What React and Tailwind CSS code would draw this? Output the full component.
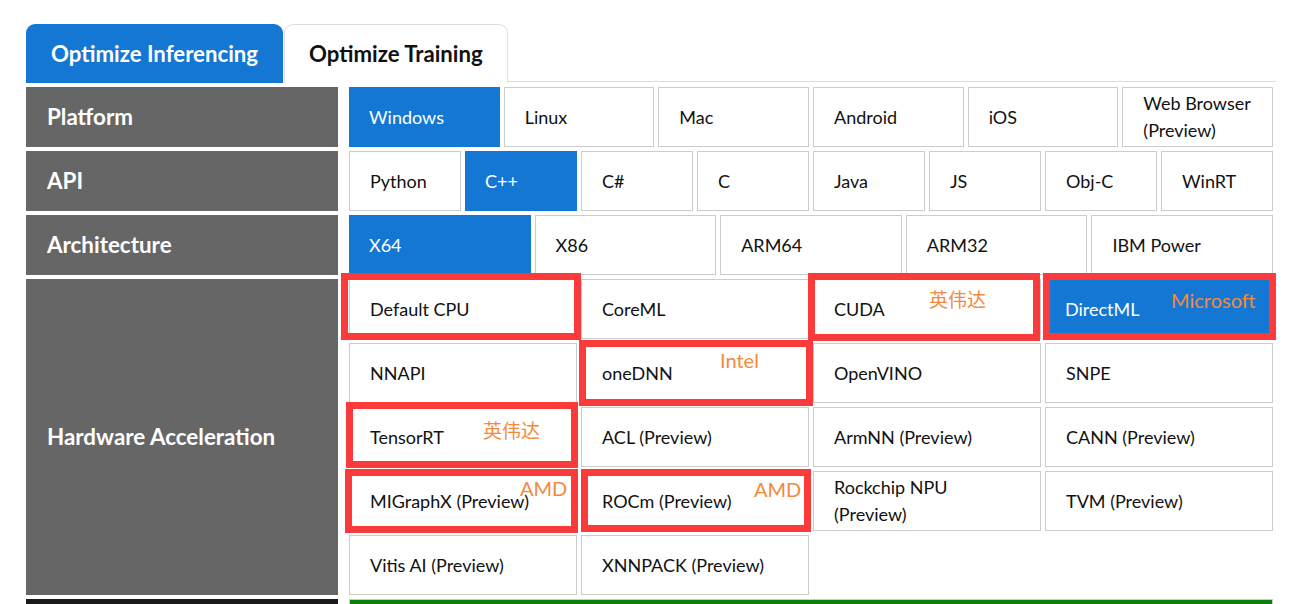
import React from "react";

const platforms = ["Windows", "Linux", "Mac", "Android", "iOS", "Web Browser (Preview)"];
const apis = ["Python", "C++", "C#", "C", "Java", "JS", "Obj-C", "WinRT"];
const archs = ["X64", "X86", "ARM64", "ARM32", "IBM Power"];
const hardware = [
  "Default CPU",
  "CoreML",
  "CUDA",
  "DirectML",
  "NNAPI",
  "oneDNN",
  "OpenVINO",
  "SNPE",
  "TensorRT",
  "ACL (Preview)",
  "ArmNN (Preview)",
  "CANN (Preview)",
  "MIGraphX (Preview)",
  "ROCm (Preview)",
  "Rockchip NPU (Preview)",
  "TVM (Preview)",
  "Vitis AI (Preview)",
  "XNNPACK (Preview)",
];

const selected = new Set(["Windows", "C++", "X64", "DirectML"]);

function Option({ label }) {
  const on = selected.has(label);
  return (
    <div
      className={
        on
          ? "flex h-[60px] items-center bg-[#1477d3] pl-[20px] pr-[18px] text-[18px] leading-[27px] text-white"
          : "flex h-[60px] items-center border border-[#cccccc] bg-white pl-[20px] pr-[18px] text-[18px] leading-[27px] text-[#111111]"
      }
    >
      <span>{label}</span>
    </div>
  );
}

function Label({ children, tall }) {
  return (
    <div
      className={
        "flex w-[312px] shrink-0 items-center bg-[#666666] pl-[21px] text-[22.4px] font-bold text-white " +
        (tall ? "h-[316px]" : "h-[60px]")
      }
    >
      {children}
    </div>
  );
}

// Red outline marking a highlighted provider
function Mark({ className }) {
  return <div className={"pointer-events-none absolute border-[7px] border-[#fc3a3a] " + className} />;
}

// Vendor note written over a provider cell
function Note({ className, children, cjk }) {
  return (
    <span
      className={
        "pointer-events-none absolute leading-none text-[#f5893b] " +
        (cjk
          ? "text-[19px] [font-family:'Noto_Sans_CJK_SC',sans-serif]"
          : "text-[20px]") +
        " " +
        className
      }
    >
      {children}
    </span>
  );
}

export default function App() {
  return (
    <div className="relative h-[604px] w-[1297px] overflow-hidden bg-white pl-[26px] pt-[24px] [font-family:Lato,'Noto_Sans',sans-serif]">
      {/* tab strip */}
      <div className="flex h-[59px] w-[1250px] items-stretch">
        <div className="flex w-[257px] items-center rounded-t-[9px] bg-[#1477d3] pl-[25px] text-[22.2px] font-bold text-white">
          Optimize Inferencing
        </div>
        <div className="ml-px flex w-[224px] items-center rounded-t-[9px] border border-b-0 border-[#dddddd] pl-[24px] text-[22.2px] font-bold text-[#111111]">
          Optimize Training
        </div>
        <div className="mb-px flex-1 border-b border-[#dddddd]" />
      </div>

      {/* selector table */}
      <div className="mt-[4px] flex flex-col gap-[4px]">
        <div className="flex gap-[11px]">
          <Label>Platform</Label>
          <div className="grid w-[924px] grid-cols-6 gap-[4px]">
            {platforms.map((p) => (
              <Option key={p} label={p} />
            ))}
          </div>
        </div>
        <div className="flex gap-[11px]">
          <Label>API</Label>
          <div className="grid w-[924px] grid-cols-8 gap-[4px]">
            {apis.map((p) => (
              <Option key={p} label={p} />
            ))}
          </div>
        </div>
        <div className="flex gap-[11px]">
          <Label>Architecture</Label>
          <div className="grid w-[924px] grid-cols-5 gap-[4px]">
            {archs.map((p) => (
              <Option key={p} label={p} />
            ))}
          </div>
        </div>
        <div className="flex gap-[11px]">
          <Label tall>Hardware Acceleration</Label>
          <div className="grid w-[924px] grid-cols-4 content-start gap-[4px]">
            {hardware.map((p) => (
              <Option key={p} label={p} />
            ))}
          </div>
        </div>
        <div className="flex gap-[11px]">
          <div className="h-[40px] w-[312px] shrink-0 bg-[#1a1a1a]" />
          <div className="h-[40px] w-[924px] border border-[#cccccc] bg-[#0a7d0a]" />
        </div>
      </div>

      {/* highlights */}
      <Mark className="left-[341px] top-[273px] h-[67px] w-[240px]" />
      <Mark className="left-[579px] top-[340px] h-[66px] w-[234px]" />
      <Mark className="left-[808px] top-[273px] h-[68px] w-[232px]" />
      <Mark className="left-[1043px] top-[273px] h-[67px] w-[233px]" />
      <Mark className="left-[346px] top-[402px] h-[66px] w-[232px]" />
      <Mark className="left-[345px] top-[469px] h-[64px] w-[233px]" />
      <Mark className="left-[581px] top-[469px] h-[63px] w-[230px]" />

      <Note cjk className="left-[929px] top-[289px]">英伟达</Note>
      <Note className="left-[1171px] top-[290px]">Microsoft</Note>
      <Note className="left-[720px] top-[350px]">Intel</Note>
      <Note cjk className="left-[483px] top-[420px]">英伟达</Note>
      <Note className="left-[520px] top-[478px]">AMD</Note>
      <Note className="left-[754px] top-[479px]">AMD</Note>
    </div>
  );
}
